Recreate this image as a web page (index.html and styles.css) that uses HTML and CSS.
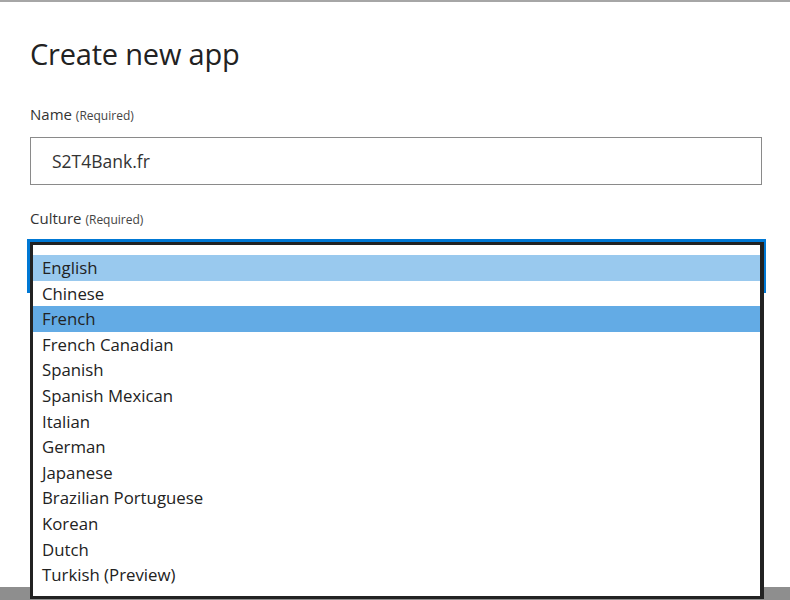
FILE: index.html
```html
<!DOCTYPE html>
<html>
<head>
<meta charset="utf-8">
<link rel="stylesheet" href="styles.css">
</head>
<body>
<div class="dialog">
  <h1 class="title">Create new app</h1>
  <div class="field name">
    <label class="label">Name <span class="req">(Required)</span></label>
    <div class="input">S2T4Bank.fr</div>
  </div>
  <div class="field culture">
    <label class="label">Culture <span class="req">(Required)</span></label>
    <div class="select-wrap">
      <div class="select"></div>
      <ul class="list">
        <li class="item hover">English</li>
        <li class="item">Chinese</li>
        <li class="item selected">French</li>
        <li class="item">French Canadian</li>
        <li class="item">Spanish</li>
        <li class="item">Spanish Mexican</li>
        <li class="item">Italian</li>
        <li class="item">German</li>
        <li class="item">Japanese</li>
        <li class="item">Brazilian Portuguese</li>
        <li class="item">Korean</li>
        <li class="item">Dutch</li>
        <li class="item">Turkish (Preview)</li>
      </ul>
    </div>
  </div>
</div>
</body>
</html>
```
FILE: styles.css
```css
html, body {
  margin: 0;
  padding: 0;
}
body {
  width: 790px;
  height: 600px;
  overflow: hidden;
  background: #8e8e8e;
  font-family: "Open Sans", "Noto Sans", sans-serif;
  color: #333;
}
.dialog {
  background: #fff;
  border-top: 2px solid #a6a6a6;
  padding: 0 28px 0 30px;
  box-sizing: border-box;
  height: 587px;
}
.title {
  margin: 0;
  padding-top: 33px;
  font-size: 29px;
  font-weight: 400;
  line-height: 38px;
  color: #222;
  letter-spacing: -0.2px;
}
.field {
  margin-top: 33px;
}
.label {
  display: block;
  font-size: 15px;
  line-height: 18px;
  color: #333;
}
.name .label {
  line-height: 16px;
}
.req {
  font-size: 12px;
  color: #444;
}
.input {
  margin-top: 13px;
  height: 48px;
  border: 1px solid #8a8a8a;
  box-sizing: border-box;
  padding-left: 21px;
  font-size: 17.5px;
  line-height: 46px;
  color: #333;
}
.culture {
  margin-top: 24px;
}
.select-wrap {
  position: relative;
  margin-top: 10px;
  margin-left: -3px;
  margin-right: -4px;
}
.select {
  height: 54px;
  border: 3px solid #0078d4;
  border-bottom: none;
  box-sizing: border-box;
}
.list {
  position: absolute;
  top: 3px;
  left: 3px;
  right: 2px;
  margin: 0;
  padding: 10px 0 8px;
  list-style: none;
  background: #fff;
  border: 3px solid #222;
  border-right-width: 4px;
}
.item {
  height: 25.6px;
  line-height: 25.6px;
  padding-left: 9px;
  font-size: 16.8px;
  color: #222;
}
.item.hover {
  background: #99c9ee;
}
.item.selected {
  background: #63abe5;
}
```
